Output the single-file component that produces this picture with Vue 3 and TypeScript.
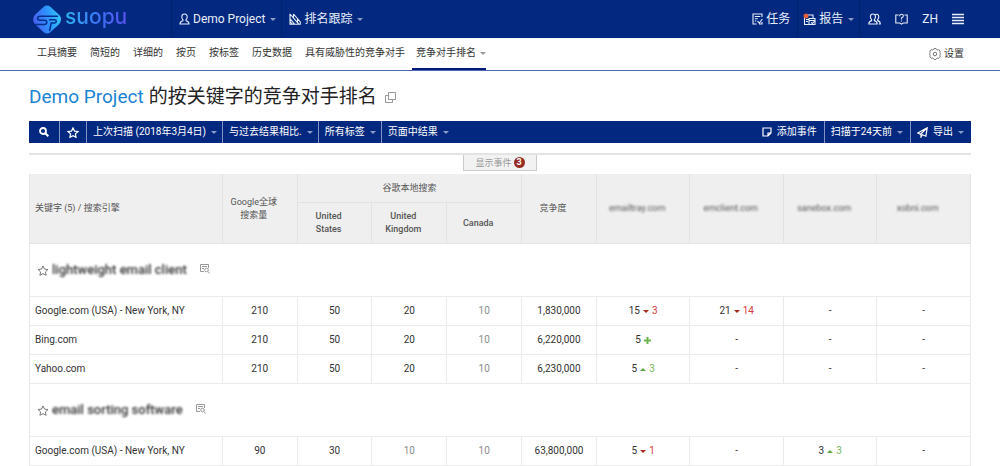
<script setup lang="ts">
interface Rank {
  value: string
  change?: string
  trend?: 'up' | 'down' | 'new'
}

interface EngineRow {
  name: string
  global: string
  local: { value: string; muted?: boolean }[]
  competition: string
  ranks: Rank[]
}

interface KeywordGroup {
  keyword: string
  rows: EngineRow[]
}

const tabs: string[] = ['工具摘要', '简短的', '详细的', '按页', '按标签', '历史数据', '具有威胁性的竞争对手']
const competitors: string[] = ['emailtray.com', 'emclient.com', 'sanebox.com', 'xobni.com']
const none: Rank = { value: '-' }
const local210 = [{ value: '50' }, { value: '20' }, { value: '10', muted: true }]

const groups: KeywordGroup[] = [
  {
    keyword: 'lightweight email client',
    rows: [
      {
        name: 'Google.com (USA) - New York, NY', global: '210', local: local210, competition: '1,830,000',
        ranks: [{ value: '15', change: '3', trend: 'down' }, { value: '21', change: '14', trend: 'down' }, none, none],
      },
      {
        name: 'Bing.com', global: '210', local: local210, competition: '6,220,000',
        ranks: [{ value: '5', trend: 'new' }, none, none, none],
      },
      {
        name: 'Yahoo.com', global: '210', local: local210, competition: '6,230,000',
        ranks: [{ value: '5', change: '3', trend: 'up' }, none, none, none],
      },
    ],
  },
  {
    keyword: 'email sorting software',
    rows: [
      {
        name: 'Google.com (USA) - New York, NY', global: '90',
        local: [{ value: '30' }, { value: '10', muted: true }, { value: '10', muted: true }],
        competition: '63,800,000',
        ranks: [{ value: '5', change: '1', trend: 'down' }, none, { value: '3', change: '3', trend: 'up' }, none],
      },
    ],
  },
]
</script>

<template>
  <div class="page">
    <header class="topbar">
      <a class="logo" href="#">
        <svg width="28" height="29" viewBox="0 0 28 29" aria-hidden="true">
          <defs>
            <linearGradient id="mark" x1="0" y1="0.6" x2="1" y2="0.4">
              <stop offset="0" stop-color="#4a5cf0" />
              <stop offset="0.5" stop-color="#2f8ffb" />
              <stop offset="1" stop-color="#2fc8fb" />
            </linearGradient>
          </defs>
          <path d="M11 1.500q3-2 6 0l9 8.300q2.400 2.400 2 4.700 0 2.300-2 4.700l-9 8.300q-3 2-6 0l-9-8.300Q0 17 .2 14.500.2 12 2 9.800Z" fill="url(#mark)" />
          <path d="M25 11.200H7.200q-2.600 0-2.600 2t2.600 2h4.200q2.400 0 2.400 2t-2.400 2.200H2" fill="none" stroke="#06308c" stroke-width="1.500" />
          <path d="M16 14.800h5.500q1.800 0 1.800 1.500t-1.800 1.700h-3.300l-1.700 8" fill="none" stroke="#06308c" stroke-width="1.500" />
        </svg>
        <span class="wordmark">suopu</span>
      </a>
      <button class="top-item project" type="button">
        <svg width="11" height="12" viewBox="0 0 11 12" class="line" aria-hidden="true">
          <path d="M5.500 1C3.800 1 2.800 2.200 2.800 3.900c0 1.200.6 2.300 1.300 3L3.900 7.800C2.300 8.200 1 9 1 11h9c0-2-1.300-2.800-2.900-3.200L6.900 6.900c.7-.7 1.300-1.800 1.300-3C8.200 2.200 7.200 1 5.500 1Z" />
        </svg>
        <span>Demo Project</span><i class="caret"></i>
      </button>
      <button class="top-item tracking" type="button">
        <svg width="12" height="12" viewBox="0 0 12 12" class="line" aria-hidden="true">
          <path d="M1 .8v10.500h4.600L1 5.500M1 1l9 10.300H5.500M4.500 1l6.800 8v2.300H9.500M4.500 1v4M8.500 5.700v3.500M1 8.500l2.500 2.800" />
        </svg>
        <span>排名跟踪</span><i class="caret"></i>
      </button>
      <nav class="top-right" aria-label="账户">
        <button class="top-item tasks" type="button">
          <svg width="11" height="12" viewBox="0 0 11 12" class="line" aria-hidden="true">
            <path d="M10 4V1H1v10h3.500M2.800 3.500h5.400M2.800 5.700h3M2.800 8h1.500M5.500 8.200l1.800 2L10.300 6M7 11h3V9" />
          </svg>
          <span>任务</span>
        </button>
        <button class="top-item reports" type="button">
          <svg width="13" height="13" viewBox="0 0 13 13" class="line" aria-hidden="true">
            <path d="M1.500 5v6.500h4M5 2h5v3M3 6.500h3M3 8.500h2M6 5.500h6v6H6zM6 7.500h6M8 9.500l1.500 1 2.500-3" />
            <circle cx="3" cy="3" r="2.500" class="dot" />
          </svg>
          <span>报告</span><i class="caret"></i>
        </button>
        <button class="icon-button" type="button" aria-label="用户">
          <svg width="13" height="12" viewBox="0 0 13 12" class="line" aria-hidden="true">
            <path d="M4.800 1C3.300 1 2.400 2 2.400 3.700c0 1.200.5 2.200 1.200 2.900v1C2 8 .8 8.900.8 11h8.400c0-2.100-1.200-3-2.900-3.400v-1C7 5.900 7.500 4.900 7.500 3.700 7.500 2 6.500 1 4.800 1ZM7.500 1.500C9.600.8 10.800 2 10.800 3.700c0 1.300-.5 2.200-1.200 2.900v1c1.700.4 2.700 1.300 2.700 3.400h-1.500" />
          </svg>
        </button>
        <button class="icon-button" type="button" aria-label="帮助">
          <svg width="13" height="12" viewBox="0 0 13 12" class="line" aria-hidden="true">
            <path d="M3.500 2H.8v8h4l1.700 1.200L8.200 10h4V2H9.500M4.600 3.200q0-2 1.900-2t1.900 1.700q0 1.100-1.900 2v1.500M6.500 7.400v1.200" />
          </svg>
        </button>
        <button class="icon-button" type="button">ZH</button>
        <button class="icon-button" type="button" aria-label="菜单">
          <svg width="12" height="12" viewBox="0 0 12 12" class="line menu" aria-hidden="true">
            <path d="M0 1.500h12M0 4.500h12M0 7.500h12M0 10.500h12" />
          </svg>
        </button>
      </nav>
    </header>

    <nav class="tabs" aria-label="报告视图">
      <a v-for="tab in tabs" :key="tab" href="#" class="tab">{{ tab }}</a>
      <a href="#" class="tab active" aria-current="page">竞争对手排名<i class="caret"></i></a>
      <a href="#" class="settings">
        <svg width="12" height="12" viewBox="0 0 12 12" aria-hidden="true">
          <path d="M4.500 1.500 5 .6h2l.5.9 1.300.5 1-.3 1.400 1.500-.4 1 .4 1.100.3.700-.3.800-.4 1 .4 1.100-1.400 1.400-1-.3-1.300.5-.5.900H5l-.5-.9L3.200 10l-1 .3L.8 8.900l.4-1.100-.4-1L.6 6l.2-.8.400-1.100-.4-1 1.400-1.400 1 .3Z" />
          <circle cx="6" cy="6" r="1.800" />
        </svg>
        设置
      </a>
    </nav>

    <main class="content">
      <h1 class="title">
        <a href="#">Demo Project</a> 的按关键字的竞争对手排名
        <button type="button" class="copy" aria-label="复制">
          <svg width="11" height="11" viewBox="0 0 11 11" aria-hidden="true">
            <path d="M3.500.5h7v7h-7zM3.500 3.500h-3v7h7v-3" />
          </svg>
        </button>
      </h1>

      <div class="toolbar">
        <button type="button" class="tool search" aria-label="搜索">
          <svg width="10" height="10" viewBox="0 0 10 10" aria-hidden="true">
            <circle cx="4" cy="4" r="3" stroke-width="1.800" /><path d="m6.300 6.300 3 3" stroke-width="2" />
          </svg>
        </button>
        <button type="button" class="tool star" aria-label="收藏">
          <svg width="12" height="11" viewBox="0 0 12 11" aria-hidden="true">
            <path d="m6 .9 1.500 3.200 3.500.4-2.600 2.400.7 3.400L6 8.600l-3.100 1.700.7-3.400L1 4.500l3.500-.4Z" stroke-width="1.200" />
          </svg>
        </button>
        <button type="button" class="tool">上次扫描 (2018年3月4日)<i class="caret"></i></button>
        <button type="button" class="tool">与过去结果相比.<i class="caret"></i></button>
        <button type="button" class="tool">所有标签<i class="caret"></i></button>
        <button type="button" class="tool">页面中结果<i class="caret"></i></button>
        <div class="toolbar-right">
          <button type="button" class="tool">
            <svg width="10" height="10" viewBox="0 0 10 10" aria-hidden="true">
              <path d="M1 1h8v5L6 9H1zM9 6H6v3" stroke-width="1.200" />
            </svg>
            添加事件
          </button>
          <button type="button" class="tool">扫描于24天前<i class="caret"></i></button>
          <button type="button" class="tool">
            <svg width="11" height="11" viewBox="0 0 11 11" aria-hidden="true">
              <path d="M10.200.8.800 6l2.700 1.200L10.200.8 8.900 9.200 5.400 7.800 4 10V7.300" stroke-width="1.200" />
            </svg>
            导出<i class="caret"></i>
          </button>
        </div>
      </div>

      <div class="events">
        <button type="button" class="events-button">显示事件<span class="badge">3</span></button>
      </div>

      <table class="ranks">
        <colgroup>
          <col class="c-name" /><col class="c-num" /><col class="c-num" /><col class="c-num" /><col class="c-num" /><col class="c-num" />
          <col v-for="c in competitors" :key="c" />
        </colgroup>
        <thead>
          <tr class="head-top">
            <th rowspan="2" class="name" scope="col">关键字 (5) / 搜索引擎</th>
            <th rowspan="2" scope="col">Google全球<br />搜索量</th>
            <th colspan="3" class="span" scope="colgroup">谷歌本地搜索</th>
            <th rowspan="2" scope="col">竞争度</th>
            <th v-for="c in competitors" :key="c" rowspan="2" scope="col"><span class="obscured">{{ c }}</span></th>
          </tr>
          <tr class="head-bottom">
            <th scope="col">United<br />States</th>
            <th scope="col">United<br />Kingdom</th>
            <th scope="col">Canada</th>
          </tr>
        </thead>
        <tbody v-for="group in groups" :key="group.keyword">
          <tr class="group">
            <th colspan="10" scope="rowgroup">
              <div class="keyword">
                <svg width="12" height="11" viewBox="0 0 12 11" aria-hidden="true">
                  <path d="m6 .9 1.500 3.200 3.500.4-2.600 2.400.7 3.400L6 8.600l-3.100 1.700.7-3.400L1 4.500l3.500-.4Z" />
                </svg>
                <span class="obscured">{{ group.keyword }}</span>
                <svg class="preview" width="10" height="10" viewBox="0 0 10 10" aria-hidden="true">
                  <path d="M4 7.500H.5v-7h8V4M2 2.500h5M2 4.500h2M8 7.500l1.500 2" /><circle cx="6.500" cy="6" r="1.800" />
                </svg>
              </div>
            </th>
          </tr>
          <tr v-for="row in group.rows" :key="row.name" class="row">
            <td class="name">{{ row.name }}</td>
            <td>{{ row.global }}</td>
            <td v-for="(cell, i) in row.local" :key="i" :class="{ muted: cell.muted }">{{ cell.value }}</td>
            <td>{{ row.competition }}</td>
            <td v-for="(rank, i) in row.ranks" :key="i">
              <span class="rank">
                {{ rank.value }}
                <svg v-if="rank.trend === 'new'" class="new" width="7" height="7" viewBox="0 0 7 7" aria-hidden="true">
                  <path d="M3.500 0v7M0 3.500h7" />
                </svg>
                <i v-else-if="rank.trend" :class="['arrow', rank.trend]"></i>
                <span v-if="rank.change" :class="rank.trend">{{ rank.change }}</span>
              </span>
            </td>
          </tr>
        </tbody>
      </table>
    </main>
  </div>
</template>

<style>
body {
  background: #fff;
}
</style>

<style scoped>
.page {
  font: 10px/14px Roboto, "Noto Sans CJK SC", sans-serif;
  color: #333;
}

button {
  font: inherit;
  color: inherit;
  background: none;
  border: 0;
  margin: 0;
  padding: 0;
  cursor: pointer;
  white-space: nowrap;
}

a {
  color: inherit;
  text-decoration: none;
}

svg {
  flex: none;
  fill: none;
  stroke: currentColor;
}

.caret {
  flex: none;
  border: solid transparent;
  border-width: 3px 3px 0;
  border-top-color: #8a9cc8;
}

/* Top bar */
.topbar {
  display: flex;
  height: 38px;
  padding: 0 36px 0 33px;
  background: #02297f;
  color: #e8eefc;
  font-size: 12px;
  line-height: 16px;
}

.logo {
  display: flex;
  align-items: center;
  gap: 4px;
  width: 138px;
}

.logo svg {
  stroke: none;
}

.wordmark {
  font: 500 21px/24px Inter, sans-serif;
  margin-bottom: 4px;
  background: linear-gradient(90deg, #2bb8f4, #3f6df5 60%, #5a50ee);
  background-clip: text;
  color: transparent;
}

.top-item {
  display: flex;
  align-items: center;
  gap: 3px;
  border-left: 1px solid #01226d;
  padding: 0 7px;
}

.project {
  padding-right: 5px;
}

.top-item .caret {
  margin-left: 2px;
}

.line {
  stroke-width: 1.1;
}

.menu {
  stroke-width: 1.5;
}

.dot {
  fill: #e2603c;
  stroke: none;
}

.top-right {
  display: flex;
  align-items: stretch;
  margin-left: auto;
}

.tasks {
  border-left: 0;
}

.reports {
  border-right: 1px solid #01226d;
  padding: 0 5px;
}

.icon-button {
  display: flex;
  align-items: center;
  margin-left: 14px;
}

.reports + .icon-button {
  margin-left: 8px;
}

/* Tabs */
.tabs {
  display: flex;
  gap: 1px;
  height: 32px;
  padding: 0 36px 0 31px;
  border-bottom: 1px solid #4a6bb5;
}

.tab {
  display: flex;
  align-items: center;
  padding: 0 6px;
  border-bottom: 2px solid transparent;
  white-space: nowrap;
}

.tab.active {
  gap: 4px;
  border-bottom-color: #02197a;
  padding: 0 0 0 4px;
}

.tabs .caret {
  border-top-color: #999;
}

.settings {
  display: flex;
  align-items: center;
  gap: 3px;
  margin-left: auto;
}

.settings svg {
  color: #777;
}

/* Content */
.content {
  padding: 0 29px;
}

.title {
  display: flex;
  align-items: center;
  gap: 5px;
  box-sizing: border-box;
  height: 50px;
  margin: 0;
  padding-top: 2px;
  font-size: 19px;
  line-height: 26px;
  font-weight: 400;
  color: #222;
}

.title a {
  color: #1a83d4;
}

.copy {
  display: flex;
  margin-left: 3px;
  color: #999;
}

.toolbar {
  display: flex;
  height: 22px;
  background: #02297f;
  color: #fff;
}

.tool {
  display: flex;
  align-items: center;
  gap: 5px;
  padding: 0 5px 0 6px;
  border-right: 1px solid #8494c8;
}

.tool:nth-child(6),
.toolbar-right .tool:last-child {
  border-right: 0;
}

.toolbar-right .tool {
  padding: 0 7px 0 6px;
}

.search {
  padding: 0 10px;
}

.star {
  padding: 0 7px;
}

.toolbar-right {
  display: flex;
  margin-left: auto;
}

.events {
  display: flex;
  justify-content: center;
  height: 19px;
  margin-top: 10px;
  border-top: 2px solid #e4e4e4;
}

.events-button {
  display: flex;
  align-items: center;
  gap: 2px;
  height: 16px;
  padding: 0 11px;
  border: 1px solid #ccc;
  border-top: 0;
  background: #f2f2f2;
  color: #999;
  font-size: 9px;
}

.badge {
  width: 11px;
  height: 11px;
  border-radius: 50%;
  background: #962d22;
  color: #fff;
  font-weight: 700;
  line-height: 11px;
  text-align: center;
}

/* Table */
.ranks {
  width: 100%;
  table-layout: fixed;
  border-collapse: separate;
  border-spacing: 0;
  border-left: 1px solid #e6e6e6;
}

.c-name {
  width: 20.5%;
}

.c-num {
  width: 7.95%;
}

th,
td {
  box-sizing: border-box;
  padding: 0 5px;
  border: solid #ebebeb;
  border-width: 0 1px 1px 0;
  text-align: center;
  vertical-align: middle;
  font-weight: 400;
}

thead th {
  background: #efefef;
  border-color: #e2e2e2;
  padding: 0 17px 0 5px;
  color: #555;
  font-size: 9px;
  line-height: 13px;
  font-weight: 500;
}

thead .span {
  padding: 0 5px;
}

.head-top th {
  font-weight: 400;
}

.head-top {
  height: 29px;
}

.head-bottom {
  height: 41px;
}

th.name,
td.name {
  padding-right: 0;
  text-align: left;
}

.group {
  height: 53px;
}

.row {
  height: 29px;
}

.keyword {
  display: flex;
  align-items: center;
  gap: 3px;
  padding-left: 2px;
  color: #777;
  font-size: 13px;
}

.keyword .obscured {
  color: #333;
  font-weight: 500;
}

.preview {
  margin: 0 0 3px 10px;
  color: #999;
}

.obscured {
  filter: blur(1px);
}

.muted {
  color: #8c8c8c;
}

.rank {
  display: inline-flex;
  align-items: center;
  gap: 3px;
}

.arrow {
  border: solid transparent;
}

.arrow.down {
  border-width: 3px 3px 0;
  border-top-color: #a5281c;
}

.arrow.up {
  border-width: 0 3px 3px;
  border-bottom-color: #5fa843;
}

.down {
  color: #d63a3a;
}

.up {
  color: #74b85c;
}

.new {
  color: #6cb54e;
  stroke-width: 2;
}
</style>
